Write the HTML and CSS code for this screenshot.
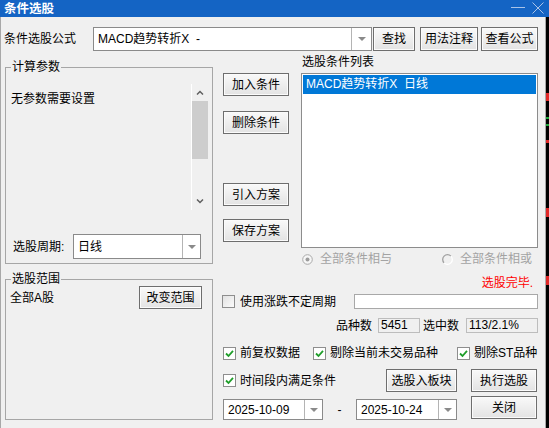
FILE: index.html
```html
<!DOCTYPE html>
<html lang="zh-CN">
<head>
  <meta charset="UTF-8">
  <title>条件选股</title>
  <link rel="stylesheet" href="styles.css">
</head>
<body>
  <div class="window">
    <div class="titlebar">
      <span class="title">条件选股</span>
      <span class="min"></span>
      <svg class="close" width="12" height="12" viewBox="0 0 12 12"><path d="M0.5 0.5 L11.5 11.5 M11.5 0.5 L0.5 11.5" stroke="#a9c3e8" stroke-width="1" fill="none"/></svg>
    </div>
    <div class="frame">
      <div class="dialog">
        <div class="formula-row">
          <span class="formula-label">条件选股公式</span>
          <div class="combo formula-combo">
            <span class="combo-text">MACD趋势转折X &nbsp;-</span>
            <span class="combo-btn"><svg width="8" height="4" viewBox="0 0 8 4"><path d="M0 0 H8 L4 4 Z" fill="#8a8a8a"/></svg></span>
          </div>
          <button class="btn btn-find">查找</button>
          <button class="btn btn-usage">用法注释</button>
          <button class="btn btn-view">查看公式</button>
        </div>

        <div class="main">
          <div class="left-col">
            <fieldset class="group group-params">
              <legend>计算参数</legend>
              <div class="param-box">
                <div class="param-text">无参数需要设置</div>
                <div class="scrollbar">
                  <span class="sb-arrow"><svg width="8" height="5" viewBox="0 0 8 5"><path d="M1 4.5 L4 1.5 L7 4.5" stroke="#606060" stroke-width="1.5" fill="none"/></svg></span>
                  <span class="sb-thumb"></span>
                  <span class="sb-track"></span>
                  <span class="sb-arrow"><svg width="8" height="5" viewBox="0 0 8 5"><path d="M1 0.5 L4 3.5 L7 0.5" stroke="#606060" stroke-width="1.5" fill="none"/></svg></span>
                </div>
              </div>
              <div class="period-row">
                <span class="period-label">选股周期:</span>
                <div class="combo period-combo">
                  <span class="combo-text">日线</span>
                  <span class="combo-btn"><svg width="8" height="4" viewBox="0 0 8 4"><path d="M0 0 H8 L4 4 Z" fill="#8a8a8a"/></svg></span>
                </div>
              </div>
            </fieldset>

            <fieldset class="group group-range">
              <legend>选股范围</legend>
              <div class="range-body">
                <div class="range-row">
                  <span>全部A股</span>
                  <button class="btn btn-range">改变范围</button>
                </div>
              </div>
            </fieldset>
          </div>

          <div class="right-col">
            <div class="cond-area">
              <div class="cond-buttons">
                <button class="btn">加入条件</button>
                <button class="btn btn-del">删除条件</button>
                <button class="btn btn-import">引入方案</button>
                <button class="btn btn-save">保存方案</button>
              </div>
              <div class="cond-list">
                <div class="list-title">选股条件列表</div>
                <div class="listbox">
                  <div class="list-item selected">MACD趋势转折X &nbsp;日线</div>
                </div>
              </div>
            </div>

            <div class="radio-row">
              <span class="radio radio-and">
                <svg width="11" height="11" viewBox="0 0 11 11"><circle cx="5.5" cy="5.5" r="4.8" fill="#f6f6f6" stroke="#aaaaaa"/><circle cx="5.5" cy="5.5" r="2" fill="#9c9c9c"/></svg>
                <span>全部条件相与</span>
              </span>
              <span class="radio radio-or">
                <svg width="11" height="11" viewBox="0 0 11 11"><path d="M8.9 2.1 A4.8 4.8 0 0 0 2.1 8.9" stroke="#a0a0a0" stroke-width="1.3" fill="none"/><path d="M2.1 8.9 A4.8 4.8 0 0 0 8.9 2.1" stroke="#ffffff" stroke-width="1.3" fill="none"/></svg>
                <span>全部条件相或</span>
              </span>
            </div>

            <div class="status-row">选股完毕.</div>

            <div class="period-check-row">
              <span class="check"><span class="cb"></span><span>使用涨跌不定周期</span></span>
              <span class="edit"></span>
            </div>

            <div class="count-row">
              <span class="count-label">品种数</span>
              <span class="count-box count-total">5451</span>
              <span class="count-label count-label-sel">选中数</span>
              <span class="count-box count-sel">113/2.1%</span>
            </div>

            <div class="option-row">
              <span class="check opt-fq"><span class="cb checked"><svg width="11" height="11" viewBox="0 0 11 11"><path d="M2 5.5 L4.5 8 L9 2.8" stroke="#1f9e2a" stroke-width="1.8" fill="none"/></svg></span><span>前复权数据</span></span>
              <span class="check opt-untraded"><span class="cb checked"><svg width="11" height="11" viewBox="0 0 11 11"><path d="M2 5.5 L4.5 8 L9 2.8" stroke="#1f9e2a" stroke-width="1.8" fill="none"/></svg></span><span>剔除当前未交易品种</span></span>
              <span class="check opt-st"><span class="cb checked"><svg width="11" height="11" viewBox="0 0 11 11"><path d="M2 5.5 L4.5 8 L9 2.8" stroke="#1f9e2a" stroke-width="1.8" fill="none"/></svg></span><span>剔除ST品种</span></span>
            </div>

            <div class="action-row">
              <span class="check opt-range"><span class="cb checked"><svg width="11" height="11" viewBox="0 0 11 11"><path d="M2 5.5 L4.5 8 L9 2.8" stroke="#1f9e2a" stroke-width="1.8" fill="none"/></svg></span><span>时间段内满足条件</span></span>
              <button class="btn btn-block">选股入板块</button>
              <button class="btn btn-run">执行选股</button>
            </div>

            <div class="date-row">
              <div class="combo date-combo date-from">
                <span class="combo-text">2025-10-09</span>
                <span class="combo-btn"><svg width="8" height="4" viewBox="0 0 8 4"><path d="M0 0 H8 L4 4 Z" fill="#8a8a8a"/></svg></span>
              </div>
              <span class="date-dash">-</span>
              <div class="combo date-combo date-to">
                <span class="combo-text">2025-10-24</span>
                <span class="combo-btn"><svg width="8" height="4" viewBox="0 0 8 4"><path d="M0 0 H8 L4 4 Z" fill="#8a8a8a"/></svg></span>
              </div>
              <button class="btn btn-close">关闭</button>
            </div>
          </div>
        </div>
      </div>
      <div class="edge"></div>
    </div>
  </div>
</body>
</html>
```

FILE: styles.css
```css
* {
  margin: 0;
  padding: 0;
  box-sizing: border-box;
}
body {
  background: #000;
  color: #000;
  font: 12px/14px "Liberation Sans", "Noto Sans CJK SC", sans-serif;
}
.window {
  width: 549px;
  height: 428px;
  overflow: hidden;
}

/* title bar */
.titlebar {
  height: 17px;
  background: #1464c4;
  display: flex;
  align-items: center;
  padding-left: 4px;
}
.title {
  flex: 1;
  color: #fff;
  font-weight: bold;
  font-size: 12.5px;
}
.min {
  width: 14px;
  height: 1px;
  background: #a9c3e8;
  margin-right: 7px;
  margin-top: -3px;
}
.close {
  margin-right: 5px;
  margin-top: -2px;
}

.frame {
  display: flex;
  height: 411px;
}
.dialog {
  width: 546px;
  background: #f0f0f0;
  border-left: 1px solid #a8a8a8;
  border-right: 1px solid #a8a8a8;
  padding-left: 3px;
}
.edge {
  width: 3px;
  background: linear-gradient(to bottom,
    #000 0, #000 76px, #e02828 76px, #e02828 84px, #000 84px,
    #000 100px, #1fa83a 100px, #1fa83a 102px, #000 102px,
    #000 107px, #1fa83a 107px, #1fa83a 109px, #000 109px,
    #000 123px, #e02828 123px, #e02828 126px, #000 126px,
    #000 191px, #e02828 191px, #e02828 200px, #000 200px,
    #000 259px, #e02828 259px, #e02828 268px, #000 268px);
}

/* common controls */
.btn {
  font: inherit;
  color: #000;
  height: 23px;
  border: 1px solid #6e6e6e;
  background: linear-gradient(#f9f9f9, #e3e3e3);
  box-shadow: inset 0 0 0 1px #fbfbfb;
  cursor: default;
  white-space: nowrap;
}
.combo {
  display: flex;
  background: #fff;
  border: 1px solid #8a8a8a;
}
.combo-text {
  flex: 1;
  padding-left: 4px;
  display: flex;
  align-items: center;
  white-space: nowrap;
}
.combo-btn {
  width: 19px;
  border-left: 1px solid #b4b4b4;
  display: flex;
  align-items: center;
  justify-content: center;
}
.check {
  display: flex;
  align-items: center;
  white-space: nowrap;
}
.cb {
  width: 13px;
  height: 13px;
  border: 1px solid #8e8e8e;
  background: linear-gradient(135deg, #e2e2e2, #fbfbfb);
  margin-right: 5px;
  display: flex;
  align-items: center;
  justify-content: center;
}
.cb.checked {
  background: #fff;
  margin-right: 4px;
}

/* formula row */
.formula-row {
  display: flex;
  align-items: center;
  height: 24px;
  margin-top: 10px;
}
.formula-label {
  width: 89px;
}
.formula-combo {
  width: 279px;
  height: 24px;
}
.formula-combo .combo-btn {
  width: 20px;
}
.btn-find {
  width: 42px;
  height: 24px;
  margin-left: 1px;
}
.btn-usage {
  width: 58px;
  height: 24px;
  margin-left: 5px;
}
.btn-view {
  width: 57px;
  height: 24px;
  margin-left: 3px;
}

.main {
  display: flex;
  align-items: flex-start;
}

/* left column */
.left-col {
  width: 208px;
  margin-left: 1px;
}
.group {
  border: 1px solid #a6a6a6;
  min-width: 0;
}
.group legend {
  margin-left: 5px;
  padding: 0 1px;
  line-height: 14px;
}
.group-params {
  margin-top: 9px;
  padding-bottom: 4px;
}
.param-box {
  display: flex;
  height: 126px;
  margin: 10px 4px 0 0;
}
.param-text {
  flex: 1;
  padding: 8px 0 0 5px;
}
.scrollbar {
  width: 17px;
  border-left: 1px solid #fff;
  display: flex;
  flex-direction: column;
}
.sb-arrow {
  height: 17px;
  display: flex;
  align-items: center;
  justify-content: center;
}
.sb-thumb {
  height: 58px;
  background: #cdcdcd;
}
.sb-track {
  flex: 1;
}
.period-row {
  display: flex;
  align-items: center;
  height: 25px;
  margin-top: 24px;
  padding-left: 7px;
}
.period-label {
  width: 60px;
}
.period-combo {
  width: 128px;
  height: 25px;
}
.period-combo .combo-btn {
  width: 18px;
}
.group-range {
  margin-top: 8px;
}
.range-body {
  height: 133px;
}
.range-row {
  display: flex;
  align-items: center;
  justify-content: space-between;
  height: 23px;
  padding: 0 10px 0 4px;
}
.btn-range {
  width: 63px;
}

/* right column */
.right-col {
  width: 316px;
  margin-left: 9px;
}
.cond-area {
  display: flex;
  align-items: flex-start;
}
.cond-buttons {
  display: flex;
  flex-direction: column;
  width: 66px;
  margin: 22px 0 0 1px;
}
.btn-del {
  margin-top: 15px;
}
.btn-import {
  margin-top: 49px;
}
.btn-save {
  margin-top: 13px;
}
.cond-list {
  width: 237px;
  margin-left: 12px;
}
.list-title {
  margin-top: 4px;
  padding-left: 1px;
}
.listbox {
  height: 175px;
  margin-top: 4px;
  border: 1px solid #8c8c8c;
  background: #fff;
  padding: 1px;
}
.list-item {
  height: 19px;
  line-height: 19px;
  padding-left: 3px;
  white-space: nowrap;
}
.list-item.selected {
  background: #0078d7;
  color: #fff;
}

.radio-row {
  display: flex;
  height: 14px;
  margin-top: 4px;
  color: #a3a3a3;
}
.radio {
  display: flex;
  align-items: center;
}
.radio svg {
  margin-right: 7px;
}
.radio-and {
  margin-left: 80px;
}
.radio-or {
  margin-left: 50px;
}

.status-row {
  height: 14px;
  margin-top: 10px;
  color: #f00;
  text-align: right;
  padding-right: 5px;
}

.period-check-row {
  display: flex;
  align-items: center;
  height: 15px;
  margin-top: 4px;
}
.edit {
  width: 184px;
  height: 15px;
  margin-left: auto;
  background: #fff;
  border: 1px solid #a8a8a8;
}

.count-row {
  display: flex;
  align-items: center;
  height: 15px;
  margin-top: 9px;
  padding-left: 114px;
  white-space: nowrap;
}
.count-label {
  flex-shrink: 0;
  margin-right: 6px;
}
.count-label-sel {
  margin-left: 3px;
  margin-right: 7px;
}
.count-box {
  flex-shrink: 0;
  height: 15px;
  line-height: 13px;
  padding-left: 2px;
  border: 1px solid #bdbdbd;
  background: #f0f0f0;
}
.count-total {
  width: 42px;
}
.count-sel {
  width: 72px;
}

.option-row {
  display: flex;
  align-items: center;
  height: 14px;
  margin-top: 13px;
}
.opt-fq {
  width: 90px;
  margin-left: 1px;
}
.opt-untraded {
  width: 144px;
}

.action-row {
  display: flex;
  align-items: center;
  height: 23px;
  margin-top: 9px;
}
.opt-range {
  margin-left: 1px;
}
.btn-block {
  width: 71px;
  margin-left: auto;
}
.btn-run {
  width: 66px;
  margin-left: 14px;
  margin-right: 1px;
}

.date-row {
  display: flex;
  align-items: flex-start;
  margin-top: 4px;
}
.date-combo {
  height: 21px;
  margin-top: 3px;
}
.date-combo .combo-btn {
  width: 18px;
}
.date-from {
  width: 100px;
  margin-left: 1px;
}
.date-to {
  width: 101px;
}
.date-dash {
  width: 33px;
  text-align: center;
  margin-top: 7px;
}
.btn-close {
  width: 66px;
  margin-left: auto;
  margin-right: 1px;
}
```
